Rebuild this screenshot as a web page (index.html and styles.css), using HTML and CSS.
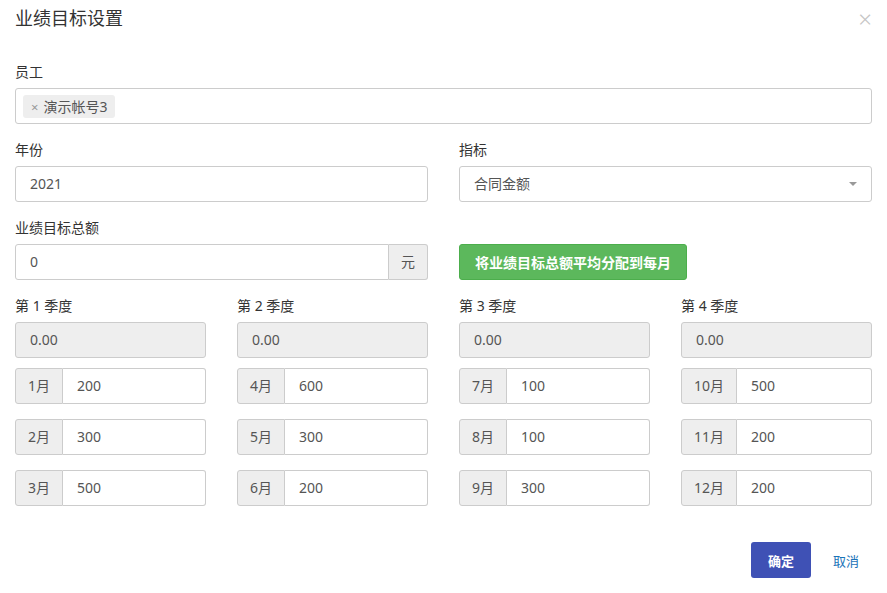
FILE: index.html
```html
<!DOCTYPE html>
<html lang="zh-CN">
<head>
    <meta charset="UTF-8">
    <meta name="viewport" content="width=device-width, initial-scale=1.0">
    <title>业绩目标设置</title>
    <link rel="stylesheet" href="styles.css">
</head>
<body>

    <div class="modal">
        <div class="modal-header">
            <h4 class="modal-title">业绩目标设置</h4>
            <span class="close">&times;</span>
        </div>

        <div class="modal-body">

            <div class="form-group">
                <label>员工</label>
                <div class="form-control tag-box">
                    <span class="tag"><span class="tag-x">&times;</span>演示帐号3</span>
                </div>
            </div>

            <div class="row-2">
                <div class="form-group">
                    <label>年份</label>
                    <div class="form-control">2021</div>
                </div>
                <div class="form-group">
                    <label>指标</label>
                    <div class="form-control select">合同金额<span class="caret"></span></div>
                </div>
            </div>

            <div class="row-2">
                <div class="form-group">
                    <label>业绩目标总额</label>
                    <div class="input-group">
                        <div class="form-control">0</div>
                        <span class="addon addon-right">元</span>
                    </div>
                </div>
                <div class="form-group btn-cell">
                    <button class="btn btn-success">将业绩目标总额平均分配到每月</button>
                </div>
            </div>

            <div class="row-4">
                <div class="quarter">
                    <label>第 1 季度</label>
                    <div class="form-control disabled">0.00</div>
                    <div class="input-group month"><span class="addon">1月</span><div class="form-control">200</div></div>
                    <div class="input-group month"><span class="addon">2月</span><div class="form-control">300</div></div>
                    <div class="input-group month"><span class="addon">3月</span><div class="form-control">500</div></div>
                </div>
                <div class="quarter">
                    <label>第 2 季度</label>
                    <div class="form-control disabled">0.00</div>
                    <div class="input-group month"><span class="addon">4月</span><div class="form-control">600</div></div>
                    <div class="input-group month"><span class="addon">5月</span><div class="form-control">300</div></div>
                    <div class="input-group month"><span class="addon">6月</span><div class="form-control">200</div></div>
                </div>
                <div class="quarter">
                    <label>第 3 季度</label>
                    <div class="form-control disabled">0.00</div>
                    <div class="input-group month"><span class="addon">7月</span><div class="form-control">100</div></div>
                    <div class="input-group month"><span class="addon">8月</span><div class="form-control">100</div></div>
                    <div class="input-group month"><span class="addon">9月</span><div class="form-control">300</div></div>
                </div>
                <div class="quarter">
                    <label>第 4 季度</label>
                    <div class="form-control disabled">0.00</div>
                    <div class="input-group month"><span class="addon">10月</span><div class="form-control">500</div></div>
                    <div class="input-group month"><span class="addon">11月</span><div class="form-control">200</div></div>
                    <div class="input-group month"><span class="addon">12月</span><div class="form-control">200</div></div>
                </div>
            </div>

        </div>

        <div class="modal-footer">
            <button class="btn btn-primary">确定</button>
            <button class="btn btn-link">取消</button>
        </div>
    </div>

</body>
</html>
```

FILE: styles.css
```css
body {
    margin: 0;
    background: #fff;
    color: #333;
    font-family: "Noto Sans", "Noto Sans CJK SC", sans-serif;
    font-size: 14px;
}

.modal {
    width: 887px;
    height: 593px;
    box-sizing: border-box;
}

.modal-header {
    position: relative;
    padding: 8px 15px 0;
    height: 20px;
}

.modal-title {
    margin: 0;
    font-size: 18px;
    line-height: 20px;
    font-weight: normal;
    color: #333;
}

.close {
    position: absolute;
    right: 15px;
    top: 6px;
    font-size: 24px;
    line-height: 26px;
    font-weight: 300;
    color: #c4c4c4;
}

.modal-body {
    padding: 34px 15px 0;
}

label {
    display: block;
    line-height: 20px;
    margin-bottom: 6px;
    color: #333;
}

.form-group {
    margin-bottom: 16px;
}

.form-control {
    box-sizing: border-box;
    height: 36px;
    line-height: 34px;
    padding: 0 14px;
    border: 1px solid #ccc;
    border-radius: 3px;
    color: #555;
    background: #fff;
    position: relative;
}

.tag-box {
    padding: 0 7px;
    display: flex;
    align-items: center;
}

.tag {
    display: inline-block;
    height: 23px;
    line-height: 23px;
    padding: 0 8px;
    background: #eee;
    border-radius: 3px;
    color: #555;
}

.tag-x {
    color: #999;
    margin-right: 5px;
    font-size: 13px;
}

.select .caret {
    position: absolute;
    right: 14px;
    top: 15px;
    border-top: 4px solid #999;
    border-left: 4px solid transparent;
    border-right: 4px solid transparent;
}

.row-2 {
    display: grid;
    grid-template-columns: 1fr 1fr;
    column-gap: 31px;
}

.row-4 {
    display: grid;
    grid-template-columns: repeat(4, 1fr);
    column-gap: 31px;
}

.btn-cell {
    padding-top: 26px;
}

.input-group {
    display: flex;
}

.input-group .form-control {
    flex: 1;
}

.addon {
    box-sizing: border-box;
    height: 36px;
    line-height: 34px;
    padding: 0 12px;
    border: 1px solid #ccc;
    background: #eee;
    color: #555;
}

.month .addon {
    border-radius: 3px 0 0 3px;
    border-right: 1px solid #ccc;
}

.month .form-control {
    border-left: none;
    border-radius: 0 3px 3px 0;
}

.addon-right {
    border-radius: 0 3px 3px 0;
    border-left: none;
}

.input-group .form-control:first-child {
    border-radius: 3px 0 0 3px;
}

.disabled {
    background: #eee;
    margin-bottom: 10px;
}

.month {
    margin-bottom: 15px;
}

.btn {
    box-sizing: border-box;
    height: 36px;
    padding: 0 15px;
    border: 1px solid transparent;
    border-radius: 3px;
    font-family: inherit;
    font-size: 14px;
    cursor: pointer;
}

.btn-success {
    background: #5cb85c;
    border-color: #4cae4c;
    color: #fff;
    font-weight: bold;
}

.modal-footer {
    display: flex;
    justify-content: flex-end;
    align-items: center;
    gap: 8px;
    padding: 21px 14px 0 15px;
}

.btn-primary {
    width: 60px;
    padding: 0;
    background: #3f51b5;
    color: #fff;
    font-size: 13px;
    font-weight: bold;
}

.btn-link {
    background: none;
    color: #1a73b8;
    font-size: 13px;
    padding: 0 13px;
}
```
